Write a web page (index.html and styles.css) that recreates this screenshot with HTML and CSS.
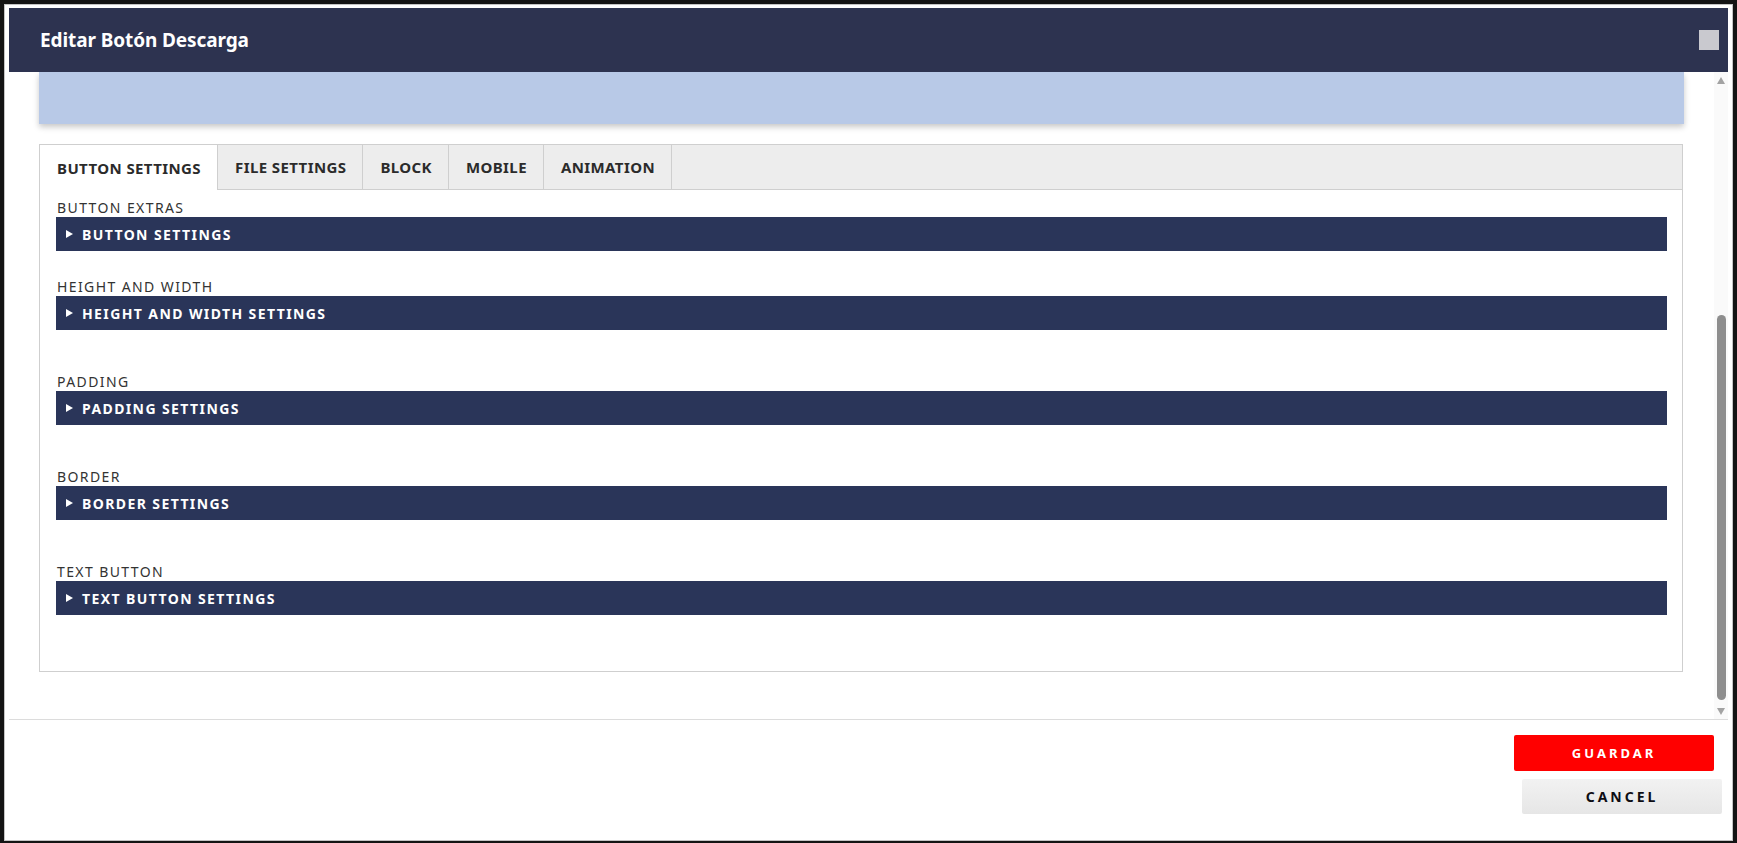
FILE: index.html
```html
<!DOCTYPE html>
<html lang="es">
<head>
<meta charset="utf-8">
<title>Editar Botón Descarga</title>
<link rel="stylesheet" href="styles.css">
</head>
<body>
<div class="dialog">
  <header class="dlg-header">
    <h1 class="dlg-title">Editar Botón Descarga</h1>
    <span class="dlg-close" aria-label="close"></span>
  </header>
  <div class="dlg-body">
    <div class="dlg-content">
      <div class="preview-band"></div>
      <div class="tabs-box">
        <nav class="tabs">
          <span class="tab tab-active">BUTTON SETTINGS</span>
          <span class="tab">FILE SETTINGS</span>
          <span class="tab">BLOCK</span>
          <span class="tab">MOBILE</span>
          <span class="tab">ANIMATION</span>
        </nav>
        <div class="tab-panel">
          <section class="group group-first">
            <div class="group-label">BUTTON EXTRAS</div>
            <div class="group-bar"><span class="tri"></span>BUTTON SETTINGS</div>
          </section>
          <section class="group">
            <div class="group-label">HEIGHT AND WIDTH</div>
            <div class="group-bar"><span class="tri"></span>HEIGHT AND WIDTH SETTINGS</div>
          </section>
          <section class="group">
            <div class="group-label">PADDING</div>
            <div class="group-bar"><span class="tri"></span>PADDING SETTINGS</div>
          </section>
          <section class="group">
            <div class="group-label">BORDER</div>
            <div class="group-bar"><span class="tri"></span>BORDER SETTINGS</div>
          </section>
          <section class="group group-last">
            <div class="group-label">TEXT BUTTON</div>
            <div class="group-bar"><span class="tri"></span>TEXT BUTTON SETTINGS</div>
          </section>
        </div>
      </div>
    </div>
    <div class="scrollbar">
      <span class="sb-arrow sb-up"></span>
      <span class="sb-thumb" style="margin-top:231px;height:385px"></span>
      <span class="sb-arrow sb-down"></span>
    </div>
  </div>
  <footer class="dlg-footer">
    <button class="btn btn-save">GUARDAR</button>
    <button class="btn btn-cancel">CANCEL</button>
  </footer>
</div>
</body>
</html>
```
FILE: styles.css
```css
* { box-sizing: border-box; }
html, body { margin: 0; padding: 0; }
body {
  background: #141414;
  height: 843px;
  overflow: hidden;
  font-family: "Noto Sans", "Open Sans", sans-serif;
}
.dialog {
  margin: 4px 4px 2px 4px;
  height: 837px;
  background: #fff;
  border: 1px solid #c4c4c4;
  padding: 3px 4px 0 4px;
  display: flex;
  flex-direction: column;
}
.dlg-header {
  height: 64px;
  flex: none;
  background: #2d3350;
  display: flex;
  align-items: center;
  justify-content: space-between;
  padding: 0 9px 0 31px;
}
.dlg-title {
  margin: 0;
  color: #fff;
  font-size: 19px;
  font-weight: 700;
  line-height: 24px;
  letter-spacing: -0.1px;
}
.dlg-close {
  width: 20px;
  height: 20px;
  background: #c9c9cf;
}
.dlg-body {
  height: 647px;
  flex: none;
  display: flex;
  overflow: hidden;
}
.dlg-content {
  flex: 1;
  padding: 0 30px 0 30px;
}
.preview-band {
  height: 52px;
  background: #b8c9e7;
  box-shadow: 0 3px 6px rgba(0,0,0,0.22);
}
.tabs-box {
  margin-top: 20px;
  border: 1px solid #cfcfcf;
  margin-right: 1px;
}
.tabs {
  display: flex;
  height: 45px;
  background: #ededed;
  border-bottom: 1px solid #cfcfcf;
}
.tab {
  display: flex;
  align-items: center;
  padding: 0 16px 0 17px;
  font-size: 15px;
  font-weight: 700;
  letter-spacing: 0.4px;
  color: #2b2b2b;
  border-right: 1px solid #cfcfcf;
  height: 44px;
}
.tab-active {
  background: #fff;
  height: 45px;
}
.tab-panel {
  padding: 8px 15px 56px 16px;
}
.group { margin-bottom: 42px; }
.group-first { margin-bottom: 26px; }
.group-last { margin-bottom: 0; }
.group-label {
  font-size: 14px;
  line-height: 16px;
  letter-spacing: 1.4px;
  color: #333;
  padding-top: 2px;
  margin: 0 0 1px 1px;
}
.group-bar {
  height: 34px;
  background: #2a3559;
  color: #fff;
  font-size: 14px;
  font-weight: 700;
  letter-spacing: 1.4px;
  display: flex;
  align-items: center;
  padding-left: 10px;
}
.tri {
  width: 0;
  height: 0;
  border-top: 4px solid transparent;
  border-bottom: 4px solid transparent;
  border-left: 7px solid #fff;
  margin-right: 9px;
}
.scrollbar {
  width: 14px;
  flex: none;
  background: #fafafa;
  display: flex;
  flex-direction: column;
  align-items: center;
  padding-top: 5px;
}
.sb-arrow {
  width: 0;
  height: 0;
  border-left: 4.5px solid transparent;
  border-right: 4.5px solid transparent;
}
.sb-up { border-bottom: 7px solid #a3a3a3; }
.sb-down { border-top: 7px solid #a3a3a3; margin-top: 8px; }
.sb-thumb {
  width: 9px;
  background: #8e8e8e;
  border-radius: 5px;
}
.dlg-footer {
  flex: 1;
  border-top: 1px solid #dcdcdc;
  display: flex;
  flex-direction: column;
  align-items: flex-end;
  padding: 15px 6px 0 0;
}
.btn {
  width: 200px;
  border: 0;
  font-family: "Noto Sans", "Open Sans", sans-serif;
  font-weight: 700;
  letter-spacing: 3px;
  cursor: pointer;
}
.btn-save {
  height: 36px;
  background: #ff0000;
  color: #fff;
  font-size: 13px;
  border-radius: 2px;
  margin-right: 8px;
}
.btn-cancel {
  height: 35px;
  margin-top: 8px;
  background: linear-gradient(#f2f2f2, #e6e6e6);
  color: #0d0d14;
  font-size: 14px;
  border-radius: 2px;
}
```
